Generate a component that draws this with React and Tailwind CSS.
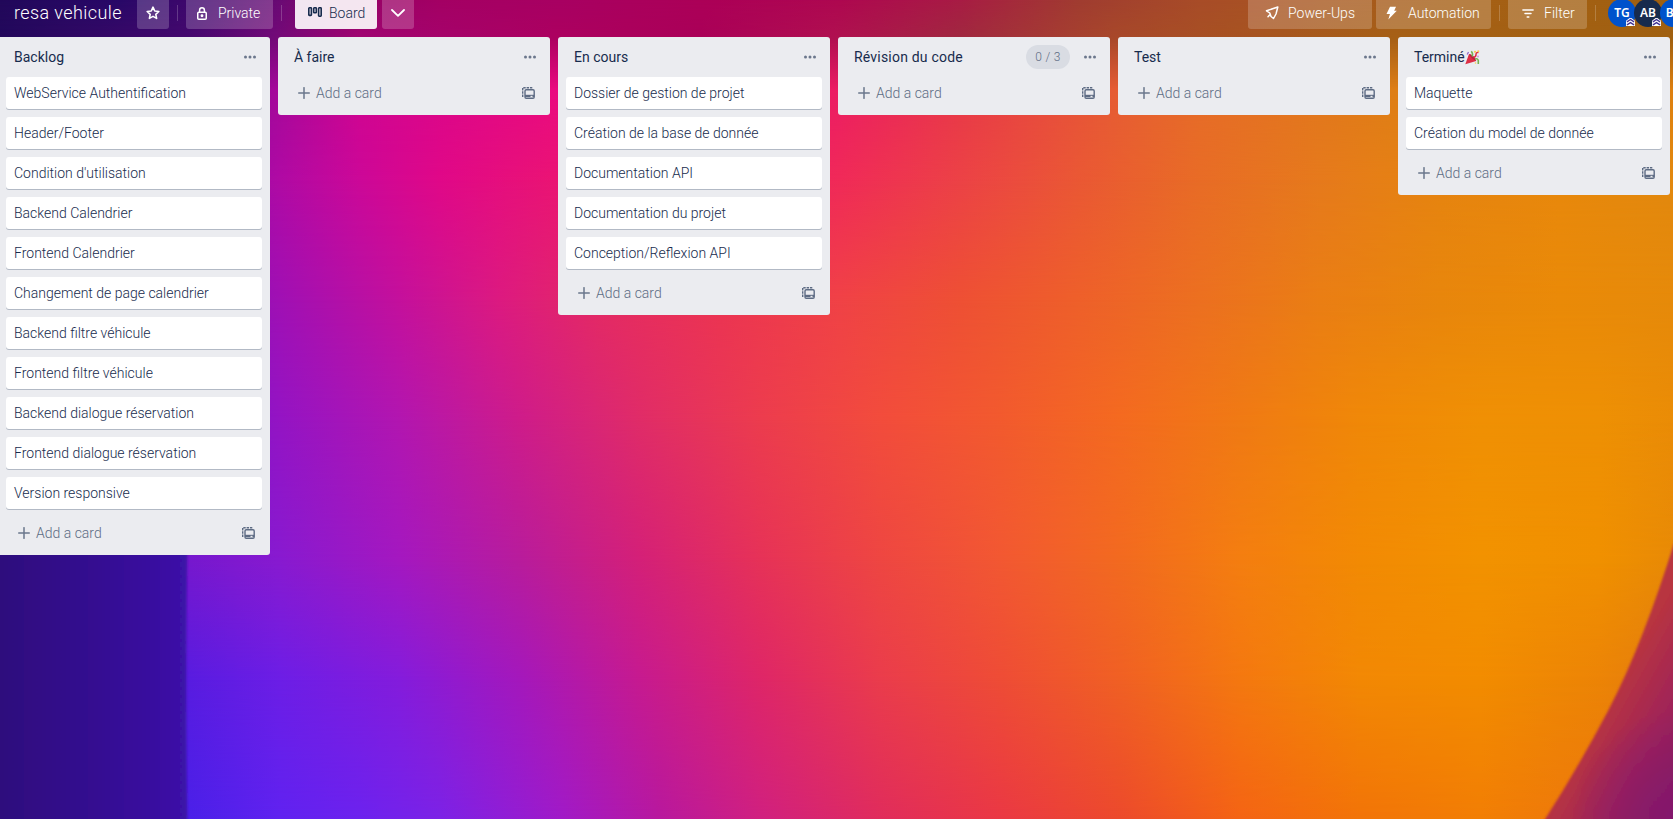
import React from "react";

const ROWS = [
  { y: 0, c: [[0, "#22085a"], [120, "#280868"], [210, "#44086e"], [280, "#6a0a74"], [340, "#920468"], [440, "#a40064"], [560, "#a80062"], [700, "#ac0058"], [840, "#ae0850"], [960, "#a81c44"], [1080, "#a03c30"], [1200, "#a84c28"], [1320, "#a85820"], [1450, "#a66016"], [1673, "#a06010"]] },
  { y: 38, c: [[0, "#22085c"], [187, "#44086e"], [274, "#720a78"], [360, "#a00472"], [554, "#ac0060"], [700, "#aa0058"], [834, "#b01050"], [960, "#a02840"], [1114, "#a8482a"], [1394, "#a66016"], [1673, "#a06010"]] },
  { y: 90, c: [[0, "#30087c"], [187, "#6a0a90"], [274, "#a4089a"], [360, "#d00490"], [554, "#ea0a80"], [700, "#ee1070"], [834, "#ec1c64"], [960, "#e83848"], [1114, "#e65c34"], [1200, "#e66c28"], [1394, "#de7e16"], [1673, "#de8010"]] },
  { y: 180, c: [[187, "#8c0ca8"], [280, "#b00aa4"], [360, "#cc0898"], [440, "#e00888"], [554, "#ea1474"], [700, "#ee1c64"], [840, "#f02a58"], [960, "#ec4246"], [1080, "#ea5834"], [1200, "#e86c26"], [1320, "#e67a1c"], [1440, "#e68410"], [1560, "#e8880c"], [1673, "#e2880e"]] },
  { y: 300, c: [[187, "#8010b8"], [280, "#a010b4"], [400, "#c4109c"], [500, "#dc1a80"], [600, "#e42a64"], [720, "#ec3452"], [840, "#f04246"], [960, "#ee5034"], [1080, "#ee602a"], [1200, "#ec7020"], [1320, "#ea7e14"], [1440, "#e8860c"], [1560, "#ea8a08"], [1673, "#e68a0a"]] },
  { y: 420, c: [[187, "#7414c8"], [280, "#9414c4"], [400, "#b216b0"], [520, "#ce1c8a"], [640, "#e02c68"], [760, "#ec3c4e"], [880, "#f24c3c"], [1000, "#f25a2e"], [1120, "#f46a20"], [1240, "#f07a14"], [1360, "#f08808"], [1480, "#f09004"], [1600, "#ee9004"], [1673, "#ea8c06"]] },
  { y: 560, c: [[187, "#7618ce"], [280, "#881ad0"], [400, "#a418c0"], [520, "#b81c9c"], [640, "#d42078"], [760, "#e63258"], [880, "#ee4642"], [1000, "#f25832"], [1120, "#f26a20"], [1240, "#f47e10"], [1360, "#f28a04"], [1480, "#f29200"], [1600, "#f09000"], [1673, "#e88a06"]] },
  { y: 680, c: [[187, "#581ce0"], [280, "#6c1ee6"], [400, "#841cdc"], [520, "#a418bc"], [640, "#c61a90"], [760, "#de2668"], [880, "#ea3c4c"], [1000, "#ee4c36"], [1120, "#f06024"], [1240, "#f47810"], [1360, "#f28804"], [1480, "#f28c00"], [1600, "#ec8406"], [1673, "#e27c10"]] },
  { y: 819, c: [[187, "#4a20e8"], [280, "#6022f0"], [360, "#6c22ee"], [440, "#7c22e6"], [560, "#a01ac8"], [660, "#b8189e"], [760, "#d02080"], [880, "#e02c5c"], [1000, "#ea3844"], [1120, "#ec4a2c"], [1240, "#f46414"], [1360, "#f27408"], [1480, "#f27e04"], [1560, "#ee7a0a"], [1673, "#ea780c"]] },
];

function Wallpaper() {
  return (
    <svg className="absolute inset-0 h-full w-full" viewBox="0 0 1673 819" preserveAspectRatio="none" aria-hidden="true">
      <defs>
        {ROWS.map((r, i) => (
          <linearGradient key={i} id={`row${i}`} gradientUnits="userSpaceOnUse" x1="0" x2="1673" y1="0" y2="0">
            {r.c.map(([x, col]) => <stop key={x} offset={x / 1673} stopColor={col} />)}
          </linearGradient>
        ))}
        <linearGradient id="fade" x1="0" x2="0" y1="0" y2="1">
          <stop offset="0" stopColor="#fff" stopOpacity="0" />
          <stop offset="1" stopColor="#fff" stopOpacity="1" />
        </linearGradient>
        <mask id="fadeMask" maskContentUnits="objectBoundingBox">
          <rect width="1" height="1" fill="url(#fade)" />
        </mask>
        <linearGradient id="night" x1="0" x2="1" y1="0" y2="0">
          <stop offset="0" stopColor="#2e0c7c" />
          <stop offset="0.5" stopColor="#340e90" />
          <stop offset="1" stopColor="#3c12a8" />
        </linearGradient>
        <linearGradient id="dusk" gradientUnits="userSpaceOnUse" x1="1580" y1="750" x2="1690" y2="812">
          <stop offset="0" stopColor="#b83440" />
          <stop offset="0.45" stopColor="#a02458" />
          <stop offset="1" stopColor="#80185e" />
        </linearGradient>
        <radialGradient id="plum" gradientUnits="userSpaceOnUse" cx="1680" cy="819" r="110">
          <stop offset="0" stopColor="#84186e" />
          <stop offset="1" stopColor="#84186e" stopOpacity="0" />
        </radialGradient>
        <filter id="soft" x="-5%" y="-5%" width="110%" height="110%"><feGaussianBlur stdDeviation="0.9" /></filter>
      </defs>
      {ROWS.slice(0, -1).map((r, i) => {
        const h = ROWS[i + 1].y - r.y;
        return (
          <g key={i}>
            <rect x="0" y={r.y} width="1673" height={h} fill={`url(#row${i})`} />
            <rect x="0" y={r.y} width="1673" height={h} fill={`url(#row${i + 1})`} mask="url(#fadeMask)" />
          </g>
        );
      })}
      <path d="M-4 540H187.500Q185 690 187.500 825H-4Z" fill="url(#night)" filter="url(#soft)" />
      <g filter="url(#soft)">
        <path d="M1680 524Q1645 640 1609 709Q1577 770 1540 827H1680Z" fill="url(#dusk)" />
        <path d="M1680 524Q1645 640 1609 709Q1577 770 1540 827H1680Z" fill="url(#plum)" />
      </g>
    </svg>
  );
}

const Dots = () => (
  <svg width="14" height="4" viewBox="0 0 14 4" fill="#6b778c">
    <circle cx="2.500" cy="2" r="1.500" /><circle cx="7" cy="2" r="1.500" /><circle cx="11.500" cy="2" r="1.500" />
  </svg>
);

const Plus = () => (
  <svg width="12" height="12" viewBox="0 0 12 12" stroke="#6b778c" strokeWidth="1.500" strokeLinecap="round">
    <path d="M6 .7v10.600M.7 6h10.600" />
  </svg>
);

const Template = () => (
  <svg width="13" height="12" viewBox="0 0 13 12" fill="none" stroke="#5e6c84" strokeWidth="1.400">
    <path d="M.7 10V.7H10.500" strokeDasharray="2.400 .9" />
    <rect x="3" y="2.700" width="9.200" height="8.500" rx="1.200" />
    <path d="M3 9h5.500M10.500 9h1.700" strokeWidth="2.200" />
    <path d="M3 8.300h9.200" strokeWidth="1" />
  </svg>
);

const LISTS = [
  { title: "Backlog", cards: ["WebService Authentification", "Header/Footer", "Condition d'utilisation", "Backend Calendrier", "Frontend Calendrier", "Changement de page calendrier", "Backend filtre véhicule", "Frontend filtre véhicule", "Backend dialogue réservation", "Frontend dialogue réservation", "Version responsive"] },
  { title: "À faire", cards: [] },
  { title: "En cours", cards: ["Dossier de gestion de projet", "Création de la base de donnée", "Documentation API", "Documentation du projet", "Conception/Reflexion API"] },
  { title: "Révision du code", limit: "0 / 3", cards: [] },
  { title: "Test", cards: [] },
  { title: "Terminé", party: true, cards: ["Maquette", "Création du model de donnée"] },
];

const Party = () => (
  <svg width="15" height="15" viewBox="0 0 15 15">
    <path d="M.3 14.200 4 4Q9 5 11.200 11Z" fill="#dd2e44" />
    <path d="M4 4Q9 5 11.200 11Q6.500 9 4 4Z" fill="#b8203c" />
    <path d="M7 6.500Q8.500 4 6.300 1.200" stroke="#77b255" strokeWidth="1.500" fill="none" />
    <path d="M2.200 4.500 3.500 2" stroke="#9266cc" strokeWidth="1.300" />
    <path d="M8.500 7.500Q11 7 11 4.500T13.500 2.500" stroke="#dd2e44" strokeWidth="1.500" fill="none" />
    <path d="M10 9Q12.500 8 13.300 10.500V14" stroke="#77b255" strokeWidth="1.600" fill="none" />
    <circle cx="10" cy="1.800" r="1.100" fill="#ffcc4d" /><circle cx="13.300" cy="1.300" r="1" fill="#ffcc4d" /><circle cx="13" cy="6.500" r="1" fill="#c9a0dc" /><circle cx="10.500" cy="13" r=".8" fill="#ffcc4d" />
  </svg>
);

function List({ title, limit, party, cards }) {
  return (
    <section className="w-[272px] shrink-0 rounded-[3px] bg-[#ebecf0]">
      <header className="flex h-10 items-center pr-[13px] pl-4">
        <h2 className={`flex flex-1 items-center text-sm leading-5 font-normal text-[#172b4d] ${limit ? "tracking-[0.2px]" : ""}`}>
          {title}{party && <Party />}
        </h2>
        {limit && <span className="mr-[13px] flex h-6 w-11 items-center justify-center rounded-full bg-[#d9dce3] text-xs font-light tracking-[0.3px] text-[#5e6c84]">{limit}</span>}
        <Dots />
      </header>
      <div className="flex flex-col gap-2 px-2">
        {cards.map((c) => (
          <article key={c} className="flex h-8 items-center rounded-[3px] bg-white px-2 text-sm leading-5 font-light text-[#172b4d] shadow-[0_1px_0_#091e4240]">{c}</article>
        ))}
      </div>
      <footer className={`flex h-[38px] items-center pr-[15px] pb-1.5 pl-5 ${cards.length ? "mt-2" : ""}`}>
        <Plus />
        <span className="ml-1.5 flex-1 text-sm leading-5 font-light text-[#5e6c84]">Add a card</span>
        <Template />
      </footer>
    </section>
  );
}

const btn = "flex h-[29px] items-center rounded-b-[3px] bg-white/20 pb-[3px] text-sm leading-5 font-light text-white";
const Divider = () => <span className="mt-[5px] h-4 w-px bg-white/20" />;

function Avatar({ text, bg }) {
  return (
    <span className={`relative -mt-px -mr-0.5 flex size-7 shrink-0 items-center justify-center rounded-full font-['Noto_Sans',sans-serif] text-xs font-semibold text-white ${bg}`}>
      {text}
      <svg className="absolute right-px bottom-px" width="9" height="8" viewBox="0 0 10 9">
        <path d="M0 3 4 0h2l4 3V9H0Z" fill="#fff" />
        <path d="M1 4.300 5 1.700 9 4.300M1 7.800 5 5.200 9 7.800" stroke="#403294" strokeWidth="1.500" fill="none" />
      </svg>
    </span>
  );
}

export default function App() {
  return (
    <div className="relative h-screen w-full overflow-hidden font-[Roboto,sans-serif]">
      <Wallpaper />
      <div className="relative flex h-full flex-col">
        <nav className="flex h-[37px] shrink-0 items-start pl-3.5">
          <h1 className="w-[123px] pt-px text-lg leading-6 font-light tracking-[0.4px] whitespace-nowrap text-white">resa vehicule</h1>
          <button className={`${btn} w-8 justify-center`}>
            <svg width="14" height="14" viewBox="0 0 14 14" fill="none" stroke="#fff" strokeWidth="1.600" strokeLinejoin="round"><path d="m7 1.200 1.750 3.800 4.100.5-3.050 2.800.8 4.100L7 10.400l-3.600 2 .8-4.100L1.150 5.500l4.100-.5Z" /></svg>
          </button>
          <div className="ml-2 flex"><Divider /></div>
          <button className={`${btn} ml-2 w-[87px] gap-[11px] pl-[11px]`}>
            <svg width="10" height="13" viewBox="0 0 10 13" fill="none" stroke="#fff" strokeWidth="1.500"><rect x=".75" y="5.250" width="8.500" height="7" rx="1" /><path d="M2.600 5V3.200a2.400 2.400 0 0 1 4.800 0V5" /><circle cx="5" cy="8.700" r=".7" fill="#fff" /></svg>
            Private
          </button>
          <div className="ml-2 flex"><Divider /></div>
          <button className="ml-[13px] flex h-[29px] w-[82px] items-center gap-[7px] rounded-b-[3px] bg-white/90 pb-[3px] pl-[13px] text-sm leading-5 font-light text-[#172b4d]">
            <svg className="mb-0.5" width="14" height="10" viewBox="0 0 14 10" fill="none" stroke="#172b4d" strokeWidth="1.600"><rect x=".8" y=".8" width="2.600" height="7.600" rx=".6" /><rect x="5.700" y=".8" width="2.600" height="5" rx=".6" /><rect x="10.600" y=".8" width="2.600" height="8.400" rx=".6" /></svg>
            Board
          </button>
          <button className={`${btn} ml-[5px] w-8 justify-center`}>
            <svg width="14" height="8" viewBox="0 0 14 8" fill="none" stroke="#fff" strokeWidth="1.800" strokeLinecap="round" strokeLinejoin="round"><path d="m1 1 6 5.800L13 1" /></svg>
          </button>
          <div className="min-w-0 flex-1" />
          <div className="flex h-[37px] w-[425px] shrink-0 items-start overflow-hidden">
            <button className={`${btn} w-[124px] shrink-0 gap-[9px] pl-[17px]`}>
              <svg width="14" height="14" viewBox="0 0 14 14" fill="none" stroke="#fff" strokeWidth="1.500" strokeLinejoin="round"><path d="M12.800 1 1.500 4.800 4.800 7 6 10.500 8.500 12.500 11 8Z" /><path d="M4.600 9 3 10.800" strokeLinecap="round" /></svg>
              Power-Ups
            </button>
            <button className={`${btn} ml-1 w-[115px] shrink-0 gap-[11px] pl-2.5`}>
              <svg width="11" height="14" viewBox="0 0 11 14" fill="#fff"><path d="M4 .8h6L8.200 4.800h2.600L2.300 13.500 4 8H.5Z" /></svg>
              Automation
            </button>
            <div className="ml-2 flex shrink-0"><Divider /></div>
            <button className={`${btn} ml-2 w-[79px] shrink-0 gap-2.5 pl-3.5`}>
              <svg width="12" height="9" viewBox="0 0 12 9" stroke="#fff" strokeWidth="1.500" strokeLinecap="round"><path d="M.9 1h10.200M3 4.500h6M5.200 8h1.600" /></svg>
              Filter
            </button>
            <div className="ml-2 flex shrink-0"><Divider /></div>
            <div className="ml-3 flex shrink-0">
              <Avatar text="TG" bg="bg-[#0052cc]" />
              <Avatar text="AB" bg="bg-[#172b4d]" />
              <Avatar text="BD" bg="bg-[#0052cc]" />
            </div>
          </div>
        </nav>
        <main className="-ml-0.5 flex items-start gap-2">
          {LISTS.map((l) => <List key={l.title} {...l} />)}
        </main>
      </div>
    </div>
  );
}
